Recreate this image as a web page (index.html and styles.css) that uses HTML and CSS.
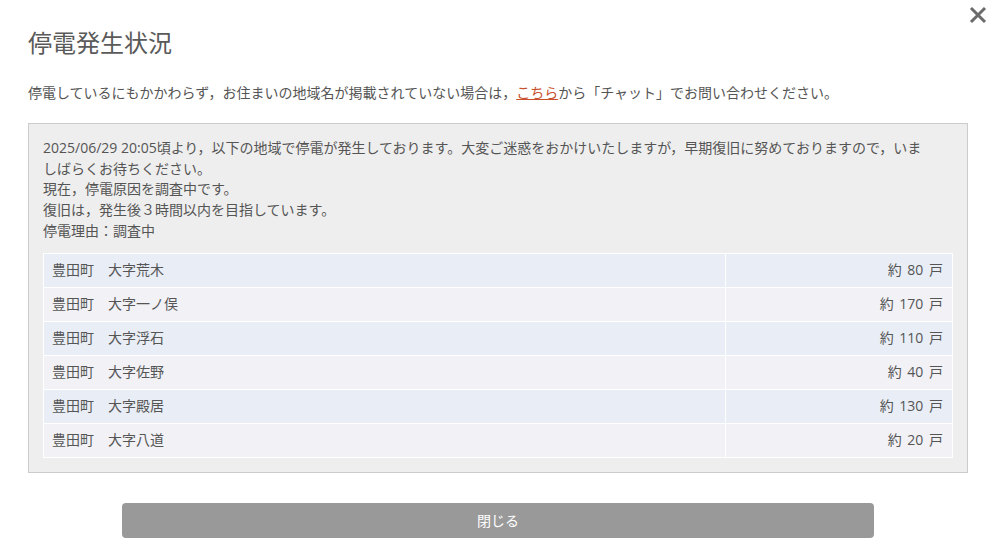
FILE: index.html
```html
<!DOCTYPE html>
<html lang="ja">
<head>
    <meta charset="UTF-8">
    <meta name="viewport" content="width=device-width, initial-scale=1.0">
    <title>停電発生状況</title>
    <link rel="stylesheet" href="styles.css">
</head>
<body>

    <!-- Modal -->
    <div class="modal">
        <a class="close" href="#" aria-label="閉じる">
            <svg width="18" height="18" viewBox="0 0 18 18">
                <path d="M2 2 L16 16 M16 2 L2 16" stroke="#6b6b6b" stroke-width="3" fill="none"/>
            </svg>
        </a>

        <h1 class="title">停電発生状況</h1>
        <p class="lead">停電しているにもかかわらず，お住まいの地域名が掲載されていない場合は，<a href="#">こちら</a>から「チャット」でお問い合わせください。</p>

        <!-- Outage info -->
        <div class="info">
            <p>2025/06/29 20:05頃より，以下の地域で停電が発生しております。大変ご迷惑をおかけいたしますが，早期復旧に努めておりますので，いましばらくお待ちください。</p>
            <p>現在，停電原因を調査中です。</p>
            <p>復旧は，発生後３時間以内を目指しています。</p>
            <p>停電理由：調査中</p>

            <table class="areas">
                <tr><td>豊田町　大字荒木</td><td class="num">約 80 戸</td></tr>
                <tr><td>豊田町　大字一ノ俣</td><td class="num">約 170 戸</td></tr>
                <tr><td>豊田町　大字浮石</td><td class="num">約 110 戸</td></tr>
                <tr><td>豊田町　大字佐野</td><td class="num">約 40 戸</td></tr>
                <tr><td>豊田町　大字殿居</td><td class="num">約 130 戸</td></tr>
                <tr><td>豊田町　大字八道</td><td class="num">約 20 戸</td></tr>
            </table>
        </div>

        <button class="close-btn">閉じる</button>
    </div>

</body>
</html>
```

FILE: styles.css
```css
/* General Body Style */
body {
    font-family: "Open Sans", "Noto Sans CJK JP", sans-serif;
    background-color: #ffffff;
    color: #555555;
    margin: 0;
    padding: 0;
}

/* Modal */
.modal {
    position: relative;
    padding: 28px 23px 0 28px;
}

.close {
    position: absolute;
    top: 6px;
    right: 4px;
    display: block;
    width: 18px;
    height: 18px;
}

.title {
    font-size: 24px;
    font-weight: normal;
    line-height: 29px;
    margin: 0;
    color: #5a5a5a;
}

.lead {
    font-size: 14px;
    line-height: 21px;
    margin: 25px 0 20px;
}

.lead a {
    color: #c8502c;
    text-decoration: underline;
}

/* Info Box */
.info {
    background-color: #eeeeee;
    border: 1px solid #cccccc;
    padding: 14px;
}

.info p {
    font-size: 14px;
    line-height: 20.7px;
    margin: 0;
    padding-right: 30px;
}

/* Area Table */
.areas {
    width: 100%;
    margin-top: 11px;
    border-collapse: collapse;
    font-size: 14px;
}

.areas td {
    height: 33px;
    padding: 0 9px 0 8px;
    border: 1px solid #ffffff;
    line-height: 20px;
}

.areas tr:nth-child(odd) td {
    background-color: #e9eef6;
}

.areas tr:nth-child(even) td {
    background-color: #f1f1f6;
}

.areas .num {
    width: 209px;
    text-align: right;
    word-spacing: 2px;
}

/* Close Button */
.close-btn {
    display: block;
    width: 80%;
    height: 35px;
    margin: 30px auto 0;
    background-color: #999999;
    color: #ffffff;
    border: none;
    border-radius: 4px;
    font-family: inherit;
    font-size: 14px;
}
```
